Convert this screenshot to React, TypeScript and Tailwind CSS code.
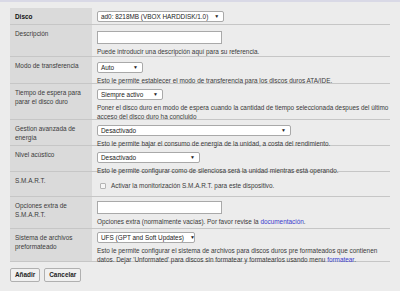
import React from "react";

type Row = {
  label: React.ReactNode;
  h: string;
  bold?: boolean;
  body: React.ReactNode;
};

function Select({ text, w }: { text: string; w: string }) {
  return (
    <div
      className={`flex items-center justify-between gap-[6px] h-[11px] ${w} whitespace-nowrap bg-white border border-[#a9a9a9] rounded-[2px] pl-[3px] pr-[4px] text-[#222]`}
    >
      <span>{text}</span>
      <span className="text-[5px]">▼</span>
    </div>
  );
}

function Input() {
  return <div className="h-[13px] w-[125px] bg-white border border-[#a9a9a9]" />;
}

function Help({ children }: { children: React.ReactNode }) {
  return <p className="mt-[3px] leading-[9px] text-[#3a3a3a]">{children}</p>;
}

const rows: Row[] = [
  {
    label: "Disco",
    bold: true,
    h: "h-[17px]",
    body: (
      <div className="pt-[3px]">
        <Select text="ad0: 8218MB (VBOX HARDDISK/1.0)" w="w-fit" />
      </div>
    ),
  },
  {
    label: "Descripción",
    h: "h-[32px]",
    body: (
      <div className="pt-[6px]">
        <Input />
        <Help>Puede introducir una descripción aquí para su referencia.</Help>
      </div>
    ),
  },
  {
    label: "Modo de transferencia",
    h: "h-[27px]",
    body: (
      <div className="pt-[5px]">
        <Select text="Auto" w="w-[46px]" />
        <Help>Esto le permite establecer el modo de transferencia para los discos duros ATA/IDE.</Help>
      </div>
    ),
  },
  {
    label: (
      <>
        Tiempo de espera para
        <br />
        parar el disco duro
      </>
    ),
    h: "h-[36px]",
    body: (
      <div className="pt-[5px]">
        <Select text="Siempre activo" w="w-[66px]" />
        <Help>
          Poner el disco duro en modo de espera cuando la cantidad de tiempo seleccionada despues del último
          <br />
          acceso del disco duro ha concluido
        </Help>
      </div>
    ),
  },
  {
    label: (
      <>
        Gestion avanzada de
        <br />
        energía
      </>
    ),
    h: "h-[26px]",
    body: (
      <div className="pt-[5px]">
        <Select text="Desactivado" w="w-[194px]" />
        <Help>Esto le permite bajar el consumo de energía de la unidad, a costa del rendimiento.</Help>
      </div>
    ),
  },
  {
    label: "Nivel acústico",
    h: "h-[26px]",
    body: (
      <div className="pt-[6px]">
        <Select text="Desactivado" w="w-[103px]" />
        <Help>Esto le permite configurar como de silenciosa será la unidad mientras está operando.</Help>
      </div>
    ),
  },
  {
    label: "S.M.A.R.T.",
    h: "h-[25px]",
    body: (
      <div className="pt-[9px] flex items-center gap-[5px] pl-[3px] text-[#3a3a3a]">
        <span className="w-[6px] h-[6px] border border-[#b5b5b5] bg-[#f6f6f6] rounded-[1px]" />
        <span>Activar la monitorización S.M.A.R.T. para este dispositivo.</span>
      </div>
    ),
  },
  {
    label: (
      <>
        Opciones extra de
        <br />
        S.M.A.R.T.
      </>
    ),
    h: "h-[32px]",
    body: (
      <div className="pt-[4px]">
        <Input />
        <Help>
          Opciones extra (normalmente vacías). Por favor revise la{" "}
          <span className="text-[#3a3acc]">documentación</span>.
        </Help>
      </div>
    ),
  },
  {
    label: (
      <>
        Sistema de archivos
        <br />
        preformateado
      </>
    ),
    h: "h-[33px]",
    body: (
      <div className="pt-[3px]">
        <Select text="UFS (GPT and Soft Updates)" w="w-[98px]" />
        <Help>
          Esto le permite configurar el sistema de archivos para discos duros pre formateados que contienen
          <br />
          datos. Dejar 'Unformated' para discos sin formatear y formatearlos usando menu{" "}
          <span className="text-[#3a3acc]">formatear</span>.
        </Help>
      </div>
    ),
  },
];

export default function App() {
  return (
    <div
      className="w-[400px] h-[291px] bg-[#ececec] border-t-[2px] border-[#d9d9e6] text-[6.4px] overflow-hidden"
      style={{ fontFamily: '"Liberation Sans", Arial, sans-serif' }}
    >
      <div className="pl-[10px] pr-[10px] pt-[6px]">
        {rows.map((r, i) => (
          <div key={i} className={`flex ${r.h} border-b border-[#c6c6c6]`}>
            <div
              className={`w-[82px] shrink-0 bg-[#dadada] pl-[5px] pt-[4px] leading-[9px] text-[#3a3a3a] ${
                r.bold ? "font-bold text-[#111]" : ""
              }`}
            >
              {r.label}
            </div>
            <div className="flex-1 pl-[5px]">{r.body}</div>
          </div>
        ))}
        <div className="flex gap-[4px] pt-[6px]">
          <button className="h-[14px] px-[4px] bg-[#f0f0f0] border border-[#b0b0b0] rounded-[2px] font-bold text-[#222]">
            Añadir
          </button>
          <button className="h-[14px] px-[4px] bg-[#f0f0f0] border border-[#b0b0b0] rounded-[2px] font-bold text-[#222]">
            Cancelar
          </button>
        </div>
      </div>
    </div>
  );
}
